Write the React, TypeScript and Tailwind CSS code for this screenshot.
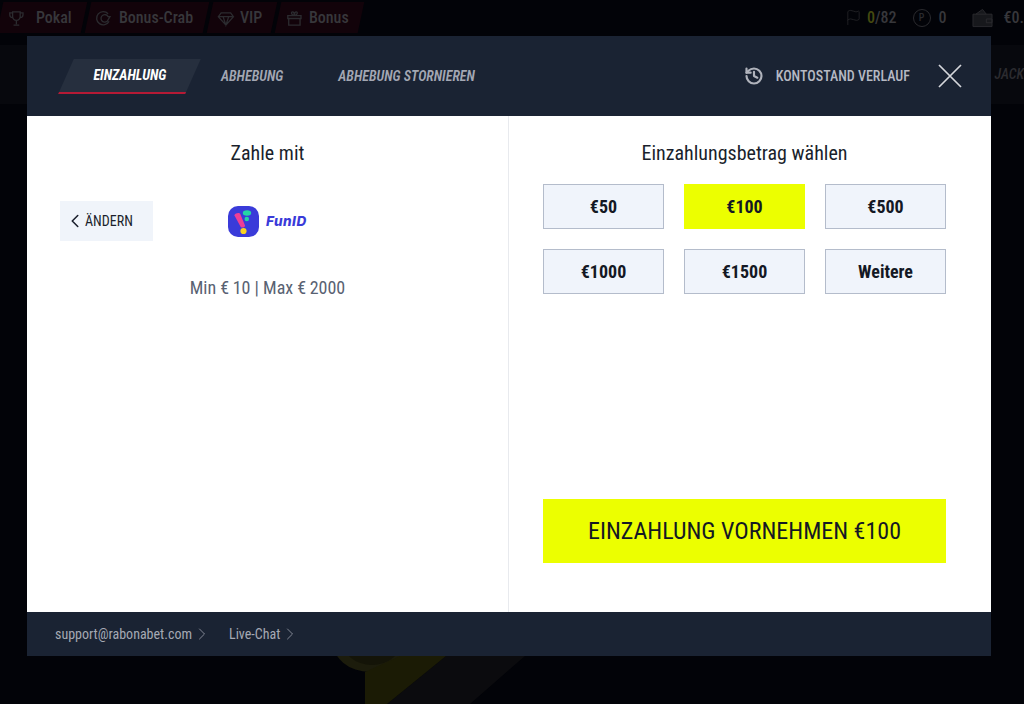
import React from 'react';
import { ChevronLeft, ChevronRight, Flag, History } from 'lucide-react';

const cond = "font-['Roboto',sans-serif] [font-stretch:75%]";

const topTabs = [
  { label: 'Pokal', width: 'w-[84px]', gap: 'gap-[11px]', icon: 'trophy' },
  { label: 'Bonus-Crab', width: 'w-[118px]', gap: 'gap-[7px]', icon: 'crab' },
  { label: 'VIP', width: 'w-[64px]', gap: 'gap-[5px]', icon: 'vip' },
  { label: 'Bonus', width: 'w-[83px]', gap: 'gap-[6px]', icon: 'gift' },
];

const amounts = ['€50', '€100', '€500', '€1000', '€1500', 'Weitere'];

function TabIcon({ name }: { name: string }) {
  const p = { fill: 'none', stroke: '#2b2b2f', strokeWidth: 1.4 };
  if (name === 'trophy')
    return (
      <svg width="17" height="17" viewBox="0 0 18 18" {...p}>
        <path d="M5 2h8v5a4 4 0 0 1-8 0zM5 3H2v2a3 3 0 0 0 3 3M13 3h3v2a3 3 0 0 1-3 3M9 11v4M6 16h6" />
      </svg>
    );
  if (name === 'crab')
    return (
      <svg width="17" height="17" viewBox="0 0 18 18" {...p}>
        <path d="M14 4a7 7 0 1 0 1 8M14 7a4 4 0 1 0-1 5l3-5z" />
      </svg>
    );
  if (name === 'vip')
    return (
      <svg width="18" height="17" viewBox="0 0 18 18" {...p}>
        <path d="M4 3h10l3 4-8 9-8-9zM1 7h16M6 7l3 9 3-9" />
      </svg>
    );
  return (
    <svg width="17" height="17" viewBox="0 0 18 18" {...p}>
      <path d="M2 6h14v3H2zM3 9h12v7H3zM9 6C6 6 5 2 7 2s2 4 2 4 0-4 2-4 1 4-2 4" />
    </svg>
  );
}

function FunIdLogo() {
  return (
    <div className="flex items-center gap-[7px]">
      <svg width="31" height="31" viewBox="0 0 31 31">
        <rect width="31" height="31" rx="10" fill="#3a3bd9" />
        <path d="M6.500 9.500c-.5-2 4.800-3.600 5.800-1.500l4.700 11.500c.5 1.800-3.400 3-4.400 1.300z" fill="#ee3f95" />
        <ellipse cx="19" cy="7" rx="4.200" ry="2.700" fill="#24d6a4" />
        <circle cx="18.800" cy="13" r="2.300" fill="#24d6a4" />
        <circle cx="15.500" cy="25" r="3.100" fill="#f9d321" />
      </svg>
      <span className="font-['Inter',sans-serif] text-[13.5px] font-extrabold tracking-[0.5px] text-[#3a3bd9] italic">FunID</span>
    </div>
  );
}

export default function App() {
  return (
    <div className={`relative h-[704px] w-[1024px] overflow-hidden bg-[#020308] ${cond}`}>
      {/* page behind the dialog */}
      <div className="flex h-[45px] items-start justify-between pt-[2px]">
        <div className="flex h-[31px] gap-[4px]">
          {topTabs.map((tab) => (
            <div
              key={tab.label}
              className={`${tab.width} flex -skew-x-12 items-center justify-center bg-[#12030a] pr-[5px]`}
            >
              <div className={`flex skew-x-12 items-center ${tab.gap} text-[16px] font-medium text-[#37373b]`}>
                <TabIcon name={tab.icon} />
                {tab.label}
              </div>
            </div>
          ))}
        </div>
        <div className="flex h-[31px] items-center text-[16px] font-medium text-[#37373b]">
          <Flag size={17} strokeWidth={1} className="mr-[5px] text-[#2a2a2e]" />
          <span className="text-[#454a10]">0</span>
          <span className="mr-[16px]">/82</span>
          <div className="mr-[8px] flex h-[18px] w-[18px] items-center justify-center rounded-full border border-[#2a2a2e] text-[10px] text-[#2a2a2e]">
            P
          </div>
          <span className="mr-[25px]">0</span>
          <svg width="21" height="20" viewBox="0 0 22 20" className="mr-[11px]">
            <path d="M1 6h20v13H1zM4 6l7-5 4 5M15 11h6v4h-6z" fill="#17181c" stroke="#2a2a2e" />
          </svg>
          <span className="whitespace-nowrap">€0.</span>
        </div>
      </div>
      <div className="flex h-[59px] items-center justify-end bg-[#07080d]">
        <span className="text-[14px] font-medium whitespace-nowrap text-[#2c2c30] italic">JACK</span>
      </div>
      <svg className="absolute bottom-0 left-[320px]" width="210" height="48" viewBox="320 656 210 48">
        <polygon points="446,656 525,656 470,704 387,704" fill="#0b0b0e" />
        <ellipse cx="370" cy="640" rx="38" ry="32" fill="#1c1c0c" />
        <ellipse cx="372" cy="640" rx="30" ry="25" fill="#141408" />
        <polygon points="400,656 446,656 387,704 365,704 365,672" fill="#1b1b05" />
      </svg>

      {/* dialog */}
      <div className="absolute top-[36px] left-[27px] flex h-[620px] w-[964px] flex-col">
        <div className="flex h-[80px] items-center justify-between bg-[#1a2333] pr-[29px] pl-[39px]">
          <div className="flex items-center">
            <div className="relative flex h-[35px] w-[127px] -skew-x-[24deg] items-center justify-center border-b-2 border-[#b51a35] bg-[#262f3e]">
              <span className="skew-x-[24deg] text-[14px] font-bold text-white italic">EINZAHLUNG</span>
            </div>
            <span className="ml-[28px] text-[14px] font-semibold text-[#a3a7b3] italic">ABHEBUNG</span>
            <span className="ml-[55px] text-[14px] font-semibold text-[#a3a7b3] italic">ABHEBUNG STORNIEREN</span>
          </div>
          <div className="flex items-center">
            <History size={20} strokeWidth={2.6} className="text-[#b0b3bc]" />
            <span className="ml-[12px] text-[14px] font-medium text-[#b6b9c3]">KONTOSTAND VERLAUF</span>
            <svg width="24" height="24" viewBox="0 0 24 24" className="ml-[28px] text-[#d5d7dc]" fill="none" stroke="currentColor" strokeWidth="1.7">
              <path d="M1 1l22 22M23 1L1 23" />
            </svg>
          </div>
        </div>

        <div className="flex flex-1 bg-white">
          <div className="flex w-[482px] flex-col items-center border-r border-[#e8eaee] pt-[24px]">
            <h2 className="text-[20px] leading-[26px] font-normal text-[#1a1f2c]">Zahle mit</h2>
            <div className="mt-[35px] flex w-full items-center pl-[33px]">
              <button className="flex h-[40px] w-[93px] items-center bg-[#f0f4fa] pl-[4px] text-[14px] text-[#1a1f2c]">
                <ChevronLeft size={22} strokeWidth={1.7} />
                <span className="-ml-[1px]">ÄNDERN</span>
              </button>
              <div className="ml-[75px]">
                <FunIdLogo />
              </div>
            </div>
            <p className="mt-[35px] text-[18px] leading-[24px] text-[#596272]">Min €&#8201;10 | Max €&#8201;2000</p>
          </div>

          <div className="flex flex-1 flex-col pt-[24px] pr-[45px] pb-[49px] pl-[34px]">
            <h2 className="text-center text-[20px] leading-[26px] font-normal text-[#1a1f2c]">Einzahlungsbetrag wählen</h2>
            <div className="mt-[18px] grid grid-cols-3 gap-x-[20px] gap-y-[20px]">
              {amounts.map((a) => (
                <button
                  key={a}
                  className={
                    a === '€100'
                      ? 'h-[45px] bg-[#ecff00] text-[18px] font-bold text-[#141824]'
                      : 'h-[45px] border border-[#b4bccb] bg-[#f0f4fb] text-[18px] font-bold text-[#141824]'
                  }
                >
                  {a}
                </button>
              ))}
            </div>
            <button className="mt-auto h-[64px] w-full bg-[#ecff00] text-[24px] font-normal text-[#141824]">
              EINZAHLUNG VORNEHMEN €100
            </button>
          </div>
        </div>

        <div className="flex h-[44px] items-center bg-[#1a2333] pl-[28px] text-[14px] text-[#a5a9b4]">
          <span>support@rabonabet.com</span>
          <ChevronRight size={20} strokeWidth={1.1} className="text-[#8b8f9c]" />
          <span className="ml-[17px]">Live-Chat</span>
          <ChevronRight size={20} strokeWidth={1.1} className="text-[#8b8f9c]" />
        </div>
      </div>
    </div>
  );
}
